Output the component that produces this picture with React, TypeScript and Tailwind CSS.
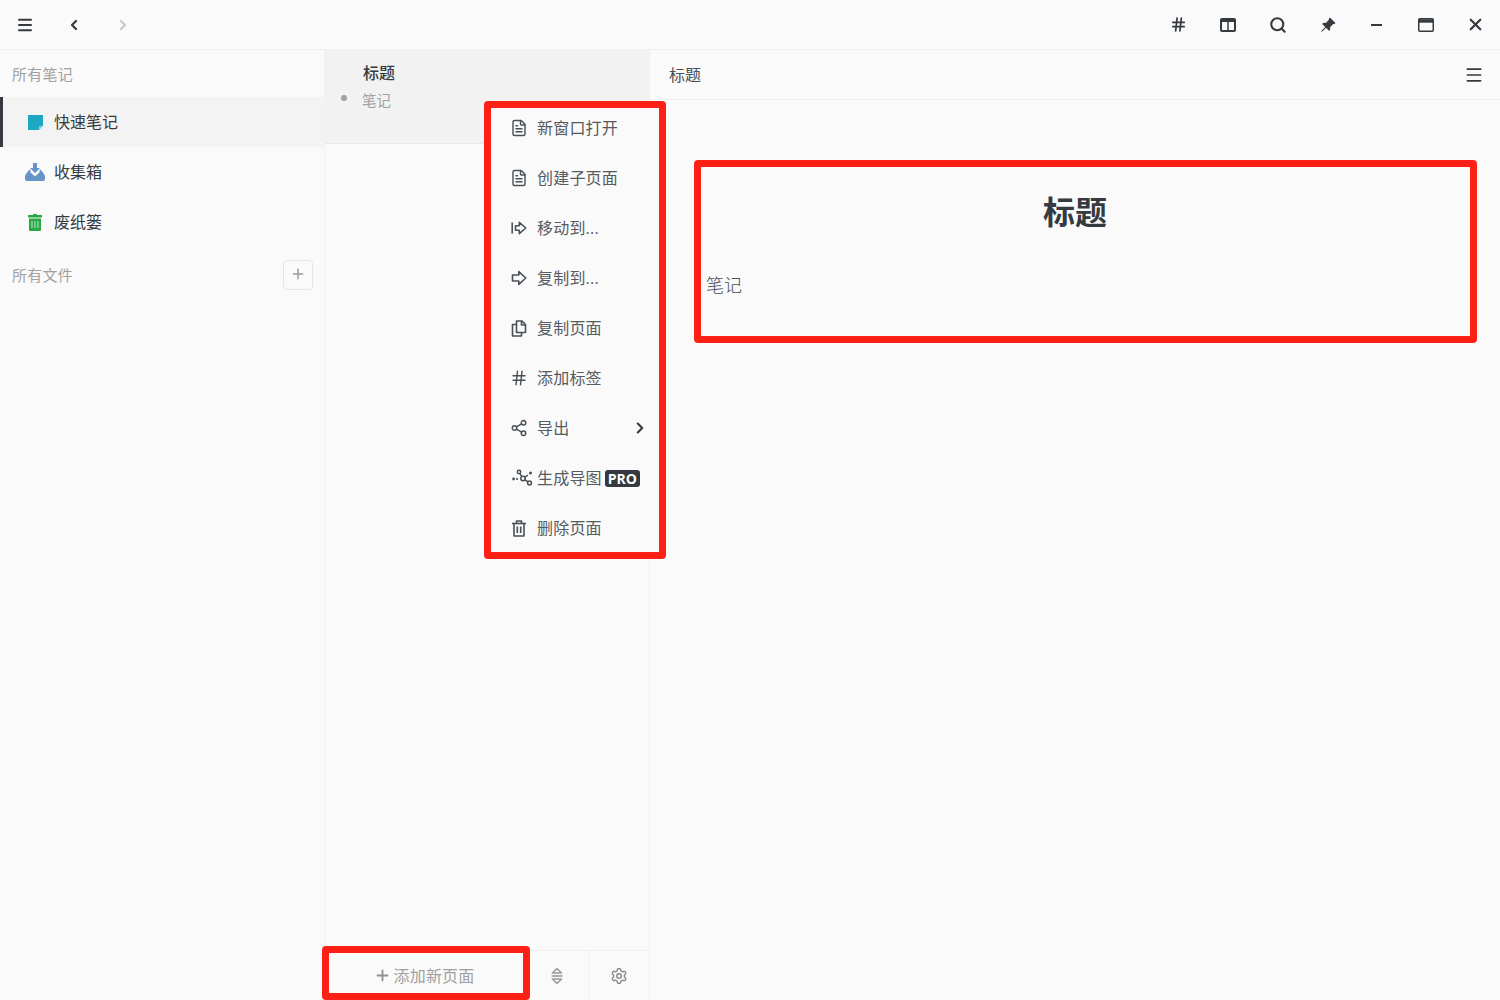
import React from 'react';
import {
  ChevronLeft,
  ChevronRight,
  FileText,
  Hash,
  Menu,
  Plus,
  Search,
  Settings,
  Share2,
  X,
} from 'lucide-react';
import { BsPinAngleFill } from 'react-icons/bs';

const FONT = "font-['Open_Sans','Noto_Sans_CJK_SC',sans-serif]";

const ColumnsIcon = () => (
  <svg width="16" height="14" viewBox="0 0 16 14" fill="none" stroke="#343a40">
    <rect x="1" y="1" width="14" height="12" rx="1" strokeWidth="2" />
    <path d="M1 3h14" strokeWidth="2" />
    <path d="M8 3v10" strokeWidth="1.5" />
  </svg>
);

const MaximizeIcon = () => (
  <svg width="16" height="14" viewBox="0 0 16 14" fill="none" stroke="#343a40">
    <rect x="0.75" y="0.75" width="14.5" height="12.5" rx="1" strokeWidth="1.5" />
    <path d="M1 3h14" strokeWidth="3.4" />
  </svg>
);

const NoteIcon = () => (
  <svg width="15" height="15" viewBox="0 0 15 15">
    <path d="M0 0h15v10.5L10.5 15H0z" fill="#1ca7c2" />
    <path d="M11 11h4l-4 4z" fill="#7fcfe0" />
  </svg>
);

const InboxIcon = () => (
  <svg width="20" height="18" viewBox="0 0 20 18">
    <path d="M8 0h4v5h3l-5 5-5-5h3z" fill="#6495c6" />
    <path d="M4.5 6.5 1 11l-1 2v3a2 2 0 0 0 2 2h16a2 2 0 0 0 2-2v-3l-1-2-3.5-4.5L14 8l1 1-5 4.5L5 9l1-1z" fill="#6495c6" />
  </svg>
);

const BinIcon = () => (
  <svg width="14" height="17" viewBox="0 0 14 17">
    <path d="M5 0h4v1h5v2.4H0V1h5z" fill="#28a745" />
    <path d="M1 4.4h12V16a1 1 0 0 1-1 1H2a1 1 0 0 1-1-1z" fill="#28a745" />
    <path d="M4 7v7M7 7v7M10 7v7" stroke="#a9dfb5" strokeWidth="1.2" />
  </svg>
);

const MoveIcon = () => (
  <svg width="16" height="16" viewBox="0 0 16 16" fill="none" stroke="#495057" strokeWidth="1.6" strokeLinejoin="round">
    <path d="M1.2 2.5v11" />
    <path d="M4.5 5.8h3.8V2.4L14.8 8l-6.5 5.6v-3.4H4.5z" />
  </svg>
);

const CopyToIcon = () => (
  <svg width="16" height="16" viewBox="0 0 16 16" fill="none" stroke="#495057" strokeWidth="1.6" strokeLinejoin="round">
    <path d="M1.5 5h6.3V1.6L14.8 8l-7 6.4V11H1.5z" />
  </svg>
);

const CopyPageIcon = () => (
  <svg width="16" height="17" viewBox="0 0 16 17" fill="none" stroke="#495057" strokeWidth="1.6" strokeLinejoin="round">
    <path d="M5.5 12.5V1h5.5l3.5 3.5v8z" />
    <path d="M10.5 1v4h4" />
    <path d="M5.5 4.5h-4V16h9v-3.5" />
  </svg>
);

const TrashIcon = () => (
  <svg width="14" height="17" viewBox="0 0 14 17" fill="none" stroke="#495057" strokeWidth="1.6" strokeLinejoin="round">
    <path d="M0 3.5h14" />
    <path d="M4.5 3.5V1h5v2.5" />
    <path d="M2 3.5V16h10V3.5" />
    <path d="M5.3 6.5v6.5M8.7 6.5v6.5" />
  </svg>
);

const MindMapIcon = () => (
  <svg width="21" height="18" viewBox="0 0 21 18" fill="none" stroke="#495057" strokeWidth="1.5">
    <circle cx="1.6" cy="10" r="1.4" fill="#495057" stroke="none" />
    <circle cx="5" cy="10" r="1.1" fill="#495057" stroke="none" />
    <circle cx="7" cy="3" r="1.7" />
    <circle cx="11" cy="9.5" r="2.2" />
    <circle cx="17.5" cy="14" r="1.9" />
    <circle cx="18.5" cy="4" r="1.5" fill="#495057" stroke="none" />
    <path d="M7.8 4.4 10 7.8M12.7 10.7l3.3 2.2M12.8 8.4 16 6" />
  </svg>
);

const SortIcon = () => (
  <svg width="14" height="18" viewBox="0 0 14 18" fill="none" stroke="#999da1" strokeWidth="1.6" strokeLinejoin="round">
    <path d="M7 1.5 11.5 6h-9z" />
    <path d="M1.5 9h11" />
    <path d="M2.5 12h9L7 16.5z" />
  </svg>
);

const MENU_ITEMS: { icon: React.ReactNode; label: string; arrow?: boolean; pro?: boolean; iconClass?: string }[] = [
  { icon: <FileText size={18} strokeWidth={1.9} />, label: '新窗口打开' },
  { icon: <FileText size={18} strokeWidth={1.9} />, label: '创建子页面' },
  { icon: <MoveIcon />, label: '移动到...' },
  { icon: <CopyToIcon />, label: '复制到...' },
  { icon: <CopyPageIcon />, label: '复制页面' },
  { icon: <Hash size={18} strokeWidth={1.9} />, label: '添加标签' },
  { icon: <Share2 size={18} strokeWidth={1.9} />, label: '导出', arrow: true },
  { icon: <MindMapIcon />, label: '生成导图', pro: true, iconClass: 'pl-[16px]' },
  { icon: <TrashIcon />, label: '删除页面' },
];

const App: React.FC = () => {
  return (
    <div className={`relative flex h-[1000px] w-[1500px] flex-col overflow-hidden bg-[#fafafa] ${FONT}`}>
      {/* Title bar */}
      <div className="flex h-[50px] shrink-0 items-center justify-between border-b border-[#f0f0f0]">
        <div className="flex">
          <button className="flex w-[49.3px] justify-center text-[#343a40]">
            <Menu size={18} strokeWidth={2.6} />
          </button>
          <button className="flex w-[49.3px] justify-center pt-[1px] text-[#343a40]">
            <ChevronLeft size={16} strokeWidth={3.4} />
          </button>
          <button className="flex w-[49.3px] justify-center pt-[1px] text-[#c9c9c9]">
            <ChevronRight size={16} strokeWidth={3.4} />
          </button>
        </div>
        <div className="flex items-center text-[#343a40]">
          <button className="flex w-[49.3px] justify-center pr-[2px]">
            <Hash size={17} strokeWidth={2.4} />
          </button>
          <button className="flex w-[49.3px] justify-center pr-[1px]">
            <ColumnsIcon />
          </button>
          <button className="flex w-[49.3px] justify-center pr-[1px]">
            <Search size={18} strokeWidth={2.8} />
          </button>
          <button className="flex w-[49.3px] justify-center pl-[1px]">
            <BsPinAngleFill size={16} />
          </button>
          <button className="flex w-[49.3px] justify-center">
            <span className="h-[2px] w-[11px] bg-[#343a40]" />
          </button>
          <button className="flex w-[49.3px] justify-center">
            <MaximizeIcon />
          </button>
          <button className="flex w-[49.3px] justify-center">
            <X size={19} strokeWidth={2.8} />
          </button>
        </div>
      </div>

      <div className="flex min-h-0 flex-1">
        {/* Sidebar */}
        <aside className="flex w-[325px] shrink-0 flex-col border-r border-[#f0f0f0]">
          <div className="flex h-[47px] items-center pl-3 pt-[2px] text-[15px] tracking-[0.25px] text-[#a0a0a0]">所有笔记</div>
          <div className="flex h-[50px] items-center border-l-[3px] border-[#343a40] bg-[#f3f3f3] pl-[25px] text-[16px] text-[#343a40]">
            <span className="flex w-[26px]">
              <NoteIcon />
            </span>
            快速笔记
          </div>
          <div className="flex h-[50px] items-center pl-[25px] text-[16px] text-[#343a40]">
            <span className="flex w-[29px]">
              <InboxIcon />
            </span>
            收集箱
          </div>
          <div className="flex h-[50px] items-center pl-[28px] text-[16px] text-[#343a40]">
            <span className="flex w-[26px]">
              <BinIcon />
            </span>
            废纸篓
          </div>
          <div className="mt-[3px] flex h-[50px] items-center justify-between pl-3 pr-[11px] text-[15px] tracking-[0.25px] text-[#a0a0a0]">
            所有文件
            <button className="flex h-[30px] w-[30px] items-center justify-center rounded-[4px] border border-[#e6e6e6] pb-[2px] text-[#9a9a9a]">
              <Plus size={16} strokeWidth={2.2} />
            </button>
          </div>
        </aside>

        {/* Page list */}
        <section className="flex w-[325px] shrink-0 flex-col border-r border-[#f0f0f0]">
          <div className="h-[94px] border-b border-[#e8e8e8] bg-[#f2f2f2] pl-[38px] pt-[11px]">
            <div className="text-[16px] font-medium leading-6 text-[#343a40]">标题</div>
            <div className="relative ml-[-1px] mt-[4px] text-[14.5px] leading-6 text-[#a0a0a0]">
              <span className="absolute left-[-21px] top-[6px] h-[6px] w-[6px] rounded-full bg-[#a0a0a0]" />
              笔记
            </div>
          </div>
          <div className="flex-1" />
          <div className="flex h-[50px] items-stretch border-t border-[#f0f0f0]">
            <button className="flex w-[200px] items-center justify-center gap-[2px] pr-[1px] text-[16px] tracking-[0.2px] text-[#a0a0a0]">
              <Plus size={17} strokeWidth={2.6} className="text-[#909090]" />
              添加新页面
            </button>
            <button className="flex w-[63px] items-center justify-center border-l border-[#f0f0f0]">
              <SortIcon />
            </button>
            <button className="flex flex-1 items-center justify-center border-l border-[#f0f0f0] text-[#8a8a8a]">
              <Settings size={18} strokeWidth={1.9} />
            </button>
          </div>
        </section>

        {/* Editor */}
        <main className="flex min-w-0 flex-1 flex-col">
          <div className="flex h-[50px] items-center justify-between border-b border-[#f0f0f0] pl-[19px] pr-[16px] text-[16px] text-[#495057]">
            标题
            <Menu size={20} strokeWidth={2} className="text-[#343a40]" />
          </div>
          <div className="px-[56px] pt-[85px]">
            <h1 className="text-center text-[32px] font-bold leading-[54px] text-[#343a40]">标题</h1>
            <p className="mt-[32px] text-[18px] font-light leading-7 text-[#495057]">笔记</p>
          </div>
        </main>
      </div>

      {/* Context menu */}
      <div className="absolute left-[491px] top-[103px] w-[168px] bg-[#fafafa]">
        {MENU_ITEMS.map((item) => (
          <div key={item.label} className="flex h-[50px] items-center text-[16px] tracking-[0.2px] text-[#555b61]">
            <span className={`flex w-[46px] justify-center text-[#495057] ${item.iconClass ?? 'pl-[10px]'}`}>{item.icon}</span>
            <span>{item.label}</span>
            {item.pro && (
              <span className="ml-[3px] rounded-[3px] bg-[#343a40] px-[3px] text-[14px] font-bold leading-[17px] tracking-normal text-white">
                PRO
              </span>
            )}
            {item.arrow && <ChevronRight size={18} strokeWidth={2.8} className="ml-auto mr-[10px] text-[#343a40]" />}
          </div>
        ))}
      </div>

      {/* Red annotation frames */}
      <div className="pointer-events-none absolute left-[484px] top-[101px] h-[458px] w-[182px] rounded-[4px] border-[7px] border-[#ff2015]" />
      <div className="pointer-events-none absolute left-[694px] top-[160px] h-[183px] w-[783px] rounded-[4px] border-[7px] border-[#ff2015]" />
      <div className="pointer-events-none absolute left-[322px] top-[946px] h-[54px] w-[208px] rounded-[4px] border-[7px] border-[#ff2015]" />
    </div>
  );
};

export default App;
